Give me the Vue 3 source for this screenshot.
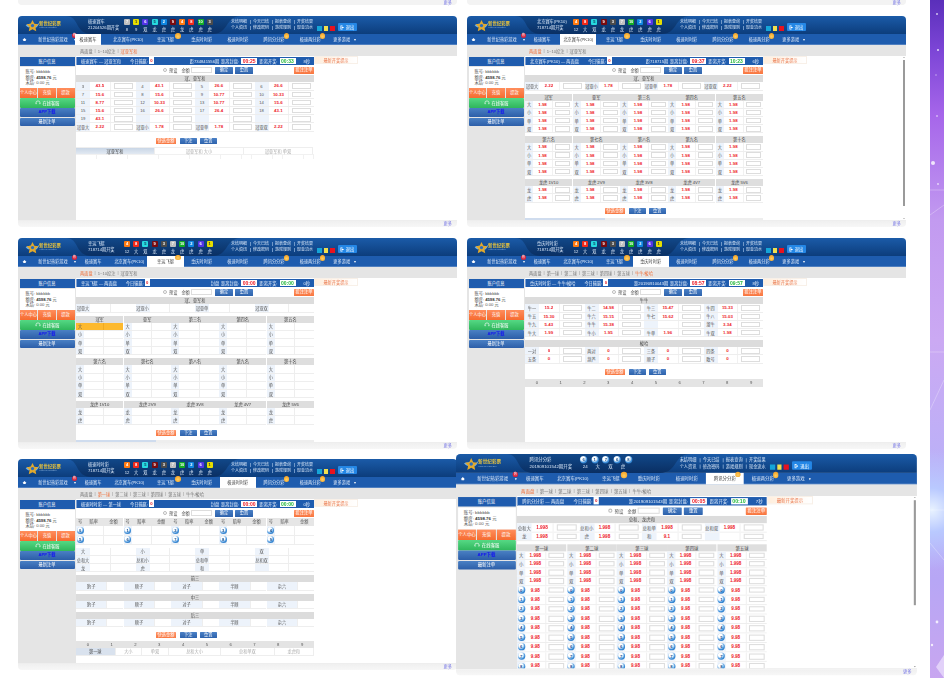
<template>
  <div class="desk">
    <div class="strip s1"><span>更多</span></div>
    <div class="strip s2"><span>更多</span></div>
    <div v-for="w in wins" :key="w.id" class="win" :class="w.id">
      <div class="top">
        <svg class="deco" viewBox="0 0 439 18" preserveAspectRatio="none">
          <defs>
            <linearGradient id="hb" x1="0" y1="0" x2="0" y2="1"><stop offset="0" stop-color="#1b5ba8" /><stop offset="1" stop-color="#0c3d7c" /></linearGradient>
            <linearGradient id="hc" x1="0" y1="0" x2="0" y2="1"><stop offset="0" stop-color="#114889" /><stop offset="1" stop-color="#0a2f63" /></linearGradient>
          </defs>
          <rect width="439" height="18" fill="url(#hb)" />
          <path d="M48 0C62 0 56 18 74 18L194 18C212 18 206 0 224 0Z" fill="url(#hc)" />
        </svg>
        <div class="logo">
          <svg class="star" viewBox="0 0 24 20">
            <path d="M1 9C6 7 10 7 13 8L6 13C4 12 2 11 1 9ZM23 5C20 9 17 10 14 10L17 14C20 12 22 9 23 5Z" fill="#6fb0e8" />
            <path d="M12 1l3 6.300 6.600.8-4.900 4.500 1.300 6.600-6-3.300-6 3.300 1.300-6.600L2.400 8.100 9 7.300Z" fill="#e2a92c" />
            <circle cx="12" cy="10" r="2.600" fill="#2a6dc0" />
          </svg>
          <div class="brand"><b>新世纪彩票</b><i>XINSHIJI LOTTERY</i></div>
        </div>
        <div class="lot"><span>{{ w.lot }}</span><span>{{ w.issue }}</span></div>
        <div class="draw">
          <div class="nums">
            <b v-for="(n, i) in w.balls" :key="i" :class="w.round ? 'rd' : 'c' + n">{{ n }}</b>
          </div>
          <div class="vals"><span v-for="(v, i) in w.vals" :key="i">{{ v }}</span></div>
        </div>
        <div class="links">
          <div><a>未结明细</a><a>今天已结</a><a>报表查询</a><a>开奖结果</a></div>
          <div><a>个人资讯</a><a>修改密码</a><a>游戏规则</a><a>现金流水</a></div>
        </div>
        <div class="skins"><i class="sk1"></i><i class="sk2"></i><i class="sk3"></i></div>
        <button class="logout">
          <svg viewBox="0 0 10 10"><path d="M1 1h4v1.500H2.500v5H5V9H1ZM5 3l3 2-3 2V5.800H3.500V4.200H5Z" fill="#fff" /></svg>退出
        </button>
      </div>

      <div class="nav">
        <a class="home">
          <svg viewBox="0 0 10 10"><path d="M5 2l4 4H7.500v2h-5V6H1Z" fill="#fff" /></svg>
        </a>
        <a class="hotgame">新世纪热彩游戏<em class="badge">热</em><u></u></a>
        <a v-for="(n, i) in navs" :key="n" class="item" :class="{ on: i === w.nav }">
          {{ n }}<em v-if="i === 2 || i === 5 || i === 6" class="fire"></em>
        </a>
        <a class="more">更多游戏<u></u></a>
      </div>

      <div class="sub">
        <template v-for="(s, i) in w.subs" :key="s">
          <span v-if="i" class="bar">|</span>
          <a :class="{ act: i === w.subOn }">{{ s }}</a>
        </template>
      </div>

      <div class="body">
        <aside class="side">
          <h4>账户信息</h4>
          <div class="acct">
            <p>账号: bbbbbb</p>
            <p>额度: <b>4598.76</b> 元</p>
            <p>未结: 0.00 元</p>
          </div>
          <div class="oran"><a>个人中心</a><a>充值</a><a>提款</a></div>
          <a class="chat">
            <svg viewBox="0 0 10 10"><path d="M1.500 6V5a3.500 3.500 0 0 1 7 0v1M2 5v2M8 5v2" fill="none" stroke="#fff" /></svg>在线客服
          </a>
          <a class="sb app">APP下载</a>
          <a class="sb">最新注单</a>
        </aside>

        <main class="mainp">
          <div class="title">
            <span class="tn">{{ w.lot }} — {{ w.page }}</span>
            <span class="tw">今日输赢:</span><b class="zero">0</b>
            <span class="ti">{{ w.next }}</span>
            <span>距离封盘:</span><b class="clk cr">{{ w.close }}</b>
            <span>距离开奖:</span><b class="clk cg">{{ w.open }}</b>
            <span class="sec">{{ w.sec }}</span>
          </div>
          <div class="form">
            <i class="chk"></i><span>预设</span><span class="amt">金额</span>
            <input class="amount" />
            <button class="bl">确定</button>
            <button class="bl">重置</button>
            <button class="or rt">投注注单</button>
          </div>

          <template v-for="(b, bi) in w.blocks" :key="bi">
            <div v-if="b.kind === 'grid'" class="block" :class="b.cls">
              <div v-if="b.title" class="head">{{ b.title }}</div>
              <div class="grid" :class="['g' + b.cols, { flowc: b.rows }]" :style="b.rows ? { gridTemplateRows: 'repeat(' + b.rows + ', auto)' } : null">
                <template v-for="(c, ci) in b.items" :key="ci">
                  <div v-if="c.head" class="ghead">{{ c.head }}</div>
                  <div v-else-if="c.ch" class="chead"><span>号</span><span>赔率</span><span>金额</span></div>
                  <div v-else class="cell" :class="{ tall: c.ball != null, pair: c.pair, hot: c.hot, shut: w.closed }">
                    <span class="lb"><i v-if="c.ball != null" class="rd">{{ c.ball }}</i><template v-else>{{ c.label }}</template></span>
                    <span v-if="!c.pair" class="od">{{ c.odds }}</span>
                    <span class="box"><input v-if="!w.closed" class="inp" /></span>
                  </div>
                </template>
              </div>
            </div>

            <div v-else-if="b.kind === 'btns'" class="btns" :class="b.cls">
              <button class="or">快选金额</button>
              <button class="bl">下注</button>
              <button class="bl">重置</button>
            </div>

            <div v-else-if="b.kind === 'digits'" class="digits">
              <span v-for="d in 10" :key="d">{{ d - 1 }}</span>
            </div>

            <div v-else-if="b.kind === 'ltabs'" class="ltabs">
              <span v-for="(t, ti) in b.tabs" :key="t" :class="{ lon: ti === 0 }">{{ t }}</span>
            </div>

            <div v-else-if="b.kind === 'tabs3'" class="tabs3">
              <div class="t3"><span class="lon">冠亚军和</span><span>冠亚军和 大小</span><span>冠亚军和 单双</span></div>
              <div class="t3b"><i v-for="n in 23" :key="n"></i></div>
            </div>
          </template>
        </main>

        <div class="notice">最新开奖提示</div>
        <div v-if="w.scroll" class="scr"><i></i></div>
      </div>

      <div class="foot"><span>更多</span></div>
    </div>

    <div class="bg">
      <svg viewBox="0 0 14 678" preserveAspectRatio="none">
        <g fill="#fff">
          <circle cx="7" cy="14" r="1" opacity=".7" /><circle cx="8" cy="50" r="1" opacity=".8" />
          <circle cx="6" cy="75" r=".8" opacity=".5" /><circle cx="7" cy="116" r="1" opacity=".5" />
          <circle cx="3" cy="163" r="2" opacity=".8" /><circle cx="8" cy="184" r=".9" opacity=".7" />
          <circle cx="7" cy="622" r="1.400" opacity=".8" /><circle cx="2" cy="645" r="1.200" opacity=".8" />
        </g>
        <g stroke="#fff" fill="none" opacity=".4">
          <path d="M0 190H14M0 352H14M0 215L14 205M0 410L14 380M0 510H14M0 543L14 560" stroke-width=".7" />
        </g>
        <path d="M14 655L6 667L14 678Z" fill="#e9dcfb" opacity=".8" />
      </svg>
    </div>
  </div>
</template>

<script setup>
const navs = ['极速赛车', '北京赛车(PK10)', '幸运飞艇', '重庆时时彩', '极速时时彩', '腾讯分分彩', '极速两分彩']

const bs = ['大', '小', '单', '双']
const cell = (label, odds = '') => ({ label, odds })
const block = (title, cols, items, cls) => ({ kind: 'grid', title, cols, items, cls })
const pairs = (list) => list.map(([l, o]) => cell(l, o))

// five columns, filled top to bottom
const five = (titles, labels, odds, extra = []) => ({
  kind: 'grid',
  cols: 5,
  rows: labels.length + extra.length + 1,
  cls: 'gap3',
  items: titles.flatMap((t) => [
    { head: t },
    ...labels.map((l) => cell(l, odds)),
    ...extra.map((n) => ({ ball: n, odds: '9.98' }))
  ])
})

const names1 = ['冠军', '亚军', '第三名', '第四名', '第五名']
const names2 = ['第六名', '第七名', '第八名', '第九名', '第十名']
const names3 = ['龙虎 1V10', '龙虎 2V9', '龙虎 3V8', '龙虎 4V7', '龙虎 5V6']

const pkPages = (odds, hot) => {
  const head = five(names1, bs, odds)
  if (hot) head.items[1].hot = true
  return [
    block('冠、亚军和', 4, pairs([['冠亚大', odds && '2.22'], ['冠亚小', odds && '1.78'], ['冠亚单', odds && '1.78'], ['冠亚双', odds && '2.22']])),
    head,
    five(names2, bs, odds),
    five(names3, ['龙', '虎'], odds),
    { kind: 'btns' },
    { kind: 'ltabs', tabs: [] }
  ]
}

const sums = pairs([['3', '43.5'], ['4', '43.1'], ['5', '26.6'], ['6', '26.6'], ['7', '15.6'], ['8', '15.6'], ['9', '10.77'], ['10', '10.33'], ['11', '8.77'], ['12', '10.33'], ['13', '10.77'], ['14', '15.6'], ['15', '15.6'], ['16', '26.6'], ['17', '26.4'], ['18', '43.1'], ['19', '43.1'], ['', ''], ['', ''], ['', ''], ['冠亚大', '2.22'], ['冠亚小', '1.78'], ['冠亚单', '1.78'], ['冠亚双', '2.22']])

const subsPk = ['两面盘', '1~10投注', '冠亚军和']
const subsSs = ['两面盘', '第一球', '第二球', '第三球', '第四球', '第五球', '牛牛/梭哈']
const pkVals = ['12', '大', '双', '龙', '虎', '龙', '虎', '虎', '虎', '虎']
const pkBalls = [4, 8, 5, 9, 3, 7, 10, 2, 6, 1]

const pair = (l) => ({ label: l, pair: true })
const threes = (t) => block(t, 5, ['豹子', '顺子', '对子', '半顺', '杂六'].map(pair), 'gap3')

const wins = [
  {
    id: 'w1', lot: '极速赛车', issue: '21204526期开奖', nav: 0, subs: subsPk, subOn: 2, page: '冠亚军和',
    balls: [7, 1, 6, 5, 2, 9, 4, 8, 10, 3], vals: ['8', '9', '双', '龙', '虎', '虎', '龙', '虎', '虎', '虎'],
    next: '距734841556期', close: '00:25', open: '00:33', sec: '8秒',
    blocks: [block('冠、亚军和', 4, sums), { kind: 'btns', cls: 'far' }, { kind: 'tabs3' }]
  },
  {
    id: 'w2', lot: '北京赛车(PK10)', issue: '718714期开奖', nav: 1, subs: subsPk, subOn: 0, page: '两面盘',
    balls: pkBalls, vals: pkVals, next: '距718715期', close: '09:37', open: '10:23', sec: '6秒', scroll: true,
    blocks: pkPages('1.98')
  },
  {
    id: 'w3', lot: '幸运飞艇', issue: '718714期开奖', nav: 2, subs: subsPk, subOn: 0, page: '两面盘',
    balls: pkBalls, vals: pkVals, next: '封盘', close: '00:00', open: '00:00', sec: '0秒', closed: true,
    blocks: pkPages('', true)
  },
  {
    id: 'w4', lot: '重庆时时彩', issue: '718714期开奖', nav: 3, subs: subsSs, subOn: 6, page: '牛牛/梭哈',
    balls: pkBalls, vals: pkVals, next: '距20190910043期', close: '08:57', open: '09:57', sec: '8秒',
    blocks: [
      block('牛牛', 4, pairs([['牛一', '15.2'], ['牛二', '14.98'], ['牛三', '15.47'], ['牛四', '15.33'], ['牛五', '15.30'], ['牛六', '15.15'], ['牛七', '15.62'], ['牛八', '15.03'], ['牛九', '5.43'], ['牛牛', '15.38'], ['', ''], ['溜牛', '3.34'], ['牛大', '1.99'], ['牛小', '1.95'], ['牛单', '1.96'], ['牛双', '1.98']])),
      block('梭哈', 4, pairs([['一对', '0'], ['两对', '0'], ['三条', '0'], ['四条', '0'], ['五条', '0'], ['葫芦', '0'], ['顺子', '0'], ['散号', '0']]), 'gap3'),
      { kind: 'btns' },
      { kind: 'digits' }
    ]
  },
  {
    id: 'w5', lot: '极速时时彩', issue: '718714期开奖', nav: 4, subs: subsSs, subOn: 1, page: '第一球',
    balls: pkBalls, vals: pkVals, next: '封盘', close: '00:00', open: '00:00', sec: '0秒', closed: true,
    blocks: [
      block('', 5, [...Array(5).fill({ ch: true }), ...[0, 1, 2, 3, 4, 5, 6, 7, 8, 9].map((n) => ({ ball: n, odds: '' }))], 'ballrows'),
      block('', 4, pairs([['大', ''], ['小', ''], ['单', ''], ['双', ''], ['总和大', ''], ['总和小', ''], ['总和单', ''], ['总和双', ''], ['龙', ''], ['虎', ''], ['和', ''], ['', '']]), 'gap3'),
      threes('前三'), threes('中三'), threes('后三'),
      { kind: 'btns' },
      { kind: 'digits' },
      { kind: 'ltabs', tabs: ['第一球', '大小', '单双', '总和大小', '总和单双', '龙虎和'] }
    ]
  },
  {
    id: 'w6', lot: '腾讯分分彩', issue: '201909101542期开奖', nav: 5, subs: subsSs, subOn: 0, page: '两面盘', round: true,
    balls: [6, 1, 7, 6, 8], vals: ['24', '大', '双', '虎'], next: '距201909101543期', close: '00:05', open: '00:10', sec: '7秒', scroll: true,
    blocks: [
      block('总和、龙虎和', 4, pairs([['总和大', '1.998'], ['总和小', '1.998'], ['总和单', '1.998'], ['总和双', '1.998'], ['龙', '1.998'], ['虎', '1.998'], ['和', '9.1'], ['', '']])),
      five(['第一球', '第二球', '第三球', '第四球', '第五球'], bs, '1.998', [0, 1, 2, 3, 4, 5, 6, 7, 8, 9])
    ]
  }
]
</script>

<style>
html, body { margin: 0; background: #fff; overflow: hidden; }
</style>

<style scoped>
.desk {
  position: relative;
  width: 944px;
  height: 678px;
  overflow: hidden;
  background: #fff;
  font-family: "Liberation Sans", "Noto Sans CJK SC", sans-serif;
  font-size: 4.200px;
  color: #555;
}
.desk * { box-sizing: border-box; }
a, i, em, u { font-style: normal; text-decoration: none; }
p, h4 { margin: 0; }
button { font: inherit; border: 0; padding: 0; }

/* tail of the shots above the first row */
.strip {
  position: absolute;
  top: 0;
  width: 439px;
  height: 5px;
  background: #f3f3f3;
  border-radius: 0 0 4px 4px;
  text-align: right;
  padding-right: 5px;
  line-height: 6px;
  color: #7777e6;
  filter: blur(.4px);
}
.s1 { left: 18px; }
.s2 { left: 467px; }

/* every screenshot sits on the free canvas */
.win {
  position: absolute;
  width: 439px;
  height: 210.500px;
  display: flex;
  flex-direction: column;
  background: #fff;
  border-radius: 4px;
  overflow: hidden;
  filter: blur(.4px);
}
.w1 { left: 18px; top: 16px; }
.w2 { left: 467px; top: 16px; }
.w3 { left: 18px; top: 238px; }
.w4 { left: 467px; top: 238px; }
.w5 { left: 18px; top: 459px; }
.w6 { left: 456px; top: 454px; transform: scale(1.05); transform-origin: 0 0; z-index: 2; }

/* header */
.top { position: relative; height: 18px; flex: none; display: flex; color: #d8e6f7; }
.deco { position: absolute; inset: 0; width: 100%; height: 100%; }
.top > *:not(.deco) { position: relative; }
.logo { width: 70px; display: flex; align-items: center; padding-left: 7px; }
.star { width: 15px; height: 13px; flex: none; }
.brand { display: flex; flex-direction: column; margin-left: -1px; white-space: nowrap; }
.brand b { color: #e8c33c; font-size: 4.400px; line-height: 5.500px; }
.brand i { color: #8fb2d8; font-size: 2px; line-height: 3px; }
.lot { width: 36px; display: flex; flex-direction: column; padding-top: 2.500px; line-height: 6px; white-space: nowrap; }
.draw { width: 107px; padding-top: 3px; }
.nums { display: flex; gap: 3.200px; height: 6px; }
.nums b { width: 6px; height: 5.500px; font-size: 4px; line-height: 5.500px; text-align: center; color: #fff; border-radius: 1px; }
.nums b.c1 { background: #e6de00; color: #333; }
.nums b.c2 { background: #0f86e0; }
.nums b.c3 { background: #4b4b4b; }
.nums b.c4 { background: #ff7a10; }
.nums b.c5 { background: #26d9e0; color: #135; }
.nums b.c6 { background: #5234e6; }
.nums b.c7 { background: #bfbfbf; }
.nums b.c8 { background: #f22a1a; }
.nums b.c9 { background: #780b10; }
.nums b.c10 { background: #14b024; }
.vals { display: flex; gap: 3.200px; margin-top: 1.500px; }
.vals span { width: 6px; text-align: center; white-space: nowrap; line-height: 5px; }
.rd {
  display: block;
  width: 7px;
  height: 7px;
  border-radius: 50%;
  background: radial-gradient(circle at 40% 35%, #fff 0 30%, #3d8fdb 60%, #13599f 100%);
  color: #0f4b8e;
  font-size: 4px;
  font-weight: bold;
  line-height: 7px;
  text-align: center;
}
.w6 .lot { width: 48px; }
.w6 .draw { width: 95px; padding-top: 1.500px; }
.w6 .nums { gap: 3.700px; height: 7px; }
.w6 .nums b { width: 7px; height: 7px; line-height: 7px; border-radius: 50%; color: #0f4b8e; }
.w6 .vals { gap: 6px; padding-left: 2px; margin-top: .5px; }
.links { width: 84px; padding-top: 3px; line-height: 6px; font-size: 4px; }
.links div { display: flex; white-space: nowrap; }
.links a { padding-right: 2.500px; margin: 1px 2.500px 1px 0; border-right: 1px solid #6f97c8; line-height: 4px; }
.links a:last-child { border: 0; }
.skins { display: flex; gap: 2px; margin-left: 2px; padding-top: 10px; }
.skins i { width: 4.500px; height: 5px; }
.sk1 { background: #15a5d8; }
.sk2 { background: #f1e04e; }
.sk3 { background: #e8121e; }
.logout {
  width: 19px;
  height: 8px;
  margin: 7px 0 0 3px;
  background: #2487e6;
  color: #fff;
  border-radius: 1px;
  display: flex;
  align-items: center;
  justify-content: center;
  gap: 1px;
}
.logout svg { width: 5px; height: 5px; }

/* nav */
.nav {
  height: 11px;
  flex: none;
  display: flex;
  background: #1e5cae;
  border-bottom: 1px solid #4f7fc0;
  color: #dce8f8;
  white-space: nowrap;
}
.nav a { position: relative; display: flex; align-items: center; justify-content: center; height: 10.500px; }
.home { width: 13px; }
.home svg { width: 5px; height: 5px; }
.hotgame { width: 44px; }
.item { width: 36.200px; flex: none; }
.item.on { background: #fff; color: #444; height: 11px; margin-top: -.5px; }
.w1 .item:nth-of-type(3) { width: 26px; }
.w1 .item:nth-of-type(4) { width: 46.400px; padding-left: 8px; }
.more { margin-left: 5px; }
.more u { margin-left: 4px; border: 1.500px solid transparent; border-top: 2px solid #fff; margin-top: 2px; }
.badge {
  position: absolute;
  right: -2px;
  top: -1px;
  width: 5px;
  height: 5px;
  border-radius: 50%;
  background: #d8213a;
  color: #fff;
  font-size: 3px;
  line-height: 5px;
  text-align: center;
}
.hotgame u { position: absolute; right: -1px; top: 5px; border: 1.500px solid transparent; border-top: 2px solid #fff; }
.fire {
  position: absolute;
  right: 3px;
  top: -1px;
  width: 5.500px;
  height: 5.500px;
  border-radius: 50%;
  background: radial-gradient(circle at 50% 60%, #ffd060, #f09418);
}

/* sub nav */
.sub {
  height: 11px;
  flex: none;
  background: #e5e5e5;
  display: flex;
  align-items: center;
  padding-left: 62px;
  color: #777;
}
.bar { margin: 0 2px; color: #888; }
.act { color: #f0703a; }

/* body */
.body { position: relative; flex: 1; min-height: 0; display: flex; overflow: hidden; }
.side { width: 58px; flex: none; background: #e5e5e5; padding: 1px 1.500px 0; display: flex; flex-direction: column; }
.side h4 {
  height: 9px;
  flex: none;
  background: #1f5cae;
  color: #fff;
  text-align: center;
  font-size: 4.200px;
  line-height: 9px;
  font-weight: normal;
  margin-bottom: .8px;
}
.acct { background: #fff; height: 21px; flex: none; padding: 2.500px 0 0 6px; line-height: 5.500px; }
.acct b { color: #333; }
.oran { display: flex; gap: .6px; height: 9.500px; flex: none; margin-top: .5px; }
.oran a {
  flex: 1;
  background: linear-gradient(#ff8d5c, #f56b30);
  color: #fff;
  text-align: center;
  line-height: 9.500px;
  white-space: nowrap;
}
.chat {
  height: 9.500px;
  flex: none;
  margin-top: .7px;
  background: linear-gradient(#55d884, #2fb65c);
  color: #fff;
  display: flex;
  align-items: center;
  justify-content: center;
  gap: 2px;
  border-radius: 1px;
}
.chat svg { width: 6px; height: 6px; }
.sb {
  height: 8.500px;
  flex: none;
  margin-top: 1px;
  background: linear-gradient(#4a80c4, #2c5ea8);
  color: #fff;
  text-align: center;
  line-height: 8.500px;
  border-radius: 1px;
}
.app { color: #1414f0; font-weight: bold; margin-top: .5px; }

.mainp { width: 238px; flex: none; padding-top: .7px; display: flex; flex-direction: column; }
.title {
  height: 8.500px;
  background: #1f5cae;
  border-left: 1px solid #7fa3d6;
  color: #e4eefb;
  display: flex;
  align-items: center;
  padding-left: 4px;
  white-space: nowrap;
  flex: none;
}
.tn { margin-right: 9px; }
.zero { background: #fff; color: #e0141e; width: 5px; height: 7px; line-height: 7px; text-align: center; margin-left: 1px; }
.ti { margin-left: auto; margin-right: 2px; }
.clk { background: #fff; width: 16px; height: 6.500px; line-height: 6.500px; text-align: center; margin: 0 2.500px 0 2px; font-size: 5px; }
.cr { color: #ee1822; }
.cg { color: #22b83a; }
.sec { width: 12px; text-align: right; margin-right: 4px; }

.form { height: 10.300px; flex: none; display: flex; align-items: center; padding-left: 87px; }
.chk { width: 4px; height: 4px; border: 1px solid #bbb; border-radius: 50%; margin-right: 2px; }
.amt { margin-left: 4px; margin-right: 1.500px; }
.amount { width: 21px; height: 6px; border: 1px solid #ddd; padding: 0; margin-right: 3px; background: #fff; }
.bl, .or { height: 6.500px; color: #fff; line-height: 6.500px; text-align: center; border-radius: .5px; }
.bl { width: 17.500px; background: linear-gradient(#4a80c6, #2d62ac); margin-right: 2.500px; }
.or { width: 20px; background: linear-gradient(#ff9466, #f8763f); margin-right: 3.500px; }
.rt { margin: 0 0 0 auto; }

/* odds tables */
.block { flex: none; }
.gap3 { margin-top: 3px; }
.head {
  height: 7px;
  background: #dcdcdc;
  color: #444;
  text-align: center;
  line-height: 7px;
}
.grid { display: grid; }
.g4 { grid-template-columns: repeat(4, minmax(0, 1fr)); }
.g5 { grid-template-columns: repeat(5, minmax(0, 1fr)); column-gap: .5px; }
.flowc { grid-auto-flow: column; }
.ghead {
  height: 7px;
  background: #dedede;
  color: #444;
  text-align: center;
  line-height: 7px;
  white-space: nowrap;
}
.chead { height: 8px; background: #e6e6e6; display: flex; color: #555; text-align: center; line-height: 8px; }
.chead span { flex: 19; }
.chead span:first-child { flex: none; width: 8px; }
.cell {
  height: 8.200px;
  display: flex;
  align-items: stretch;
  border-bottom: 1px solid #eeeeee;
  min-width: 0;
  background: #fff;
}
.cell.tall { height: 9.050px; }
.lb {
  width: 14px;
  flex: none;
  background: #edf3fb;
  color: #555;
  text-align: center;
  white-space: nowrap;
  display: flex;
  align-items: center;
  justify-content: center;
}
.g5 .lb { width: 8px; }
.od {
  flex: 20;
  color: #ee1c2a;
  font-weight: bold;
  text-align: center;
  line-height: 7.400px;
  white-space: nowrap;
  font-size: 4.400px;
}
.box { flex: 25; display: flex; align-items: center; justify-content: center; border-left: 1px solid #f1f1f1; }
.inp { width: 78%; height: 5.500px; border: 1px solid #ddd; padding: 0; background: #fff; }
.g5 .od { flex: 19; }
.g5 .box { flex: 19; }
.g5 .pair .lb { width: auto; flex: 31; }
.g5 .pair .box { flex: 16; }
.shut .box { border-left: 1px solid #eeeeee; }
.hot { background: #fdb92e; }
.hot .lb { background: #fdb92e; }
.hot .box { border-left-color: #f0aa20; }
.ballrows .cell { height: 9.200px; }

.btns { flex: none; height: 7px; margin-top: 5px; display: flex; padding-left: 80px; }
.btns.far { margin-top: 6px; }
.digits {
  flex: none;
  height: 7.500px;
  margin-top: 3.500px;
  background: #e4e4e4;
  display: grid;
  grid-template-columns: repeat(10, 1fr);
  text-align: center;
  line-height: 7.500px;
}
.w5 .digits { margin-top: 2px; }
.ltabs { flex: none; display: flex; height: 7.500px; margin-top: 3.500px; color: #aaa; }
.ltabs:empty { height: 2px; background: linear-gradient(90deg, #cfdcee 33.500%, #eee 33.500%); }
.digits + .ltabs { margin-top: 0; border-bottom: 1px solid #eee; }
.ltabs span { text-align: center; line-height: 7.500px; flex: 1; border-right: 1px solid #eee; }
.ltabs span:nth-child(1) { flex: 39; }
.ltabs span:nth-child(2) { flex: 26; }
.ltabs span:nth-child(3) { flex: 26; }
.ltabs span:nth-child(4) { flex: 52; }
.ltabs span:nth-child(5) { flex: 53; }
.ltabs span:nth-child(6) { flex: 39; }
.ltabs .lon { background: #d9e2ee; color: #444; }
.tabs3 { flex: none; margin-top: 2px; }
.t3 { display: flex; height: 7px; color: #aaa; }
.t3 span { text-align: center; line-height: 7px; border: 1px solid #eee; border-width: 1px 1px 0 0; }
.t3 span:nth-child(1) { width: 79px; background: linear-gradient(#c9d6e6, #e2e9f2); color: #444; }
.t3 span:nth-child(2) { width: 89px; }
.t3 span:nth-child(3) { width: 69px; }
.t3b { display: flex; height: 5px; background: #f1f1f1; padding: 1px 0 0; }
.t3b i { flex: 1; background: #fff; margin-right: .5px; }

.notice {
  width: 44px;
  height: 8px;
  margin-top: -.5px;
  flex: none;
  background: linear-gradient(90deg, #ffeedd, #fff);
  color: #ea7a50;
  text-align: center;
  line-height: 8px;
  border: 1px solid #f8f0e8;
}
.scr { position: absolute; right: .5px; top: 0; bottom: 0; width: 3px; background: #fff; }
.scr i { display: block; margin-top: 4px; height: 146px; width: 2px; background: #9a9a9a; }
.scr::before,
.scr::after {
  content: "";
  position: absolute;
  left: 0;
  border: 1px solid transparent;
}
.scr::before { top: 0; border-bottom: 1.500px solid #999; }
.scr::after { bottom: 0; border-top: 1.500px solid #999; }
.w6 .scr i { height: 100px; }

.foot {
  height: 6.500px;
  flex: none;
  background: linear-gradient(#f0f0f0, #f7f7f7);
  text-align: right;
  padding-right: 5px;
  color: #7777e6;
  line-height: 6.500px;
  border-top: 1px solid #eee;
}

/* page background on the right edge */
.bg {
  position: absolute;
  left: 930px;
  top: 0;
  width: 14px;
  height: 678px;
  background:
    radial-gradient(circle at 2px 510px, #e8f2ff 0, #b9c9ff 22px, transparent 60px),
    linear-gradient(#5a2fba 0, #7c45d6 50px, #a666ea 115px, #c29af0 220px, #cba9f3 340px, #bcb0f7 460px, #b7a6f5 580px, #c8a6f0 678px);
}
.bg svg { display: block; width: 14px; height: 678px; }
</style>
